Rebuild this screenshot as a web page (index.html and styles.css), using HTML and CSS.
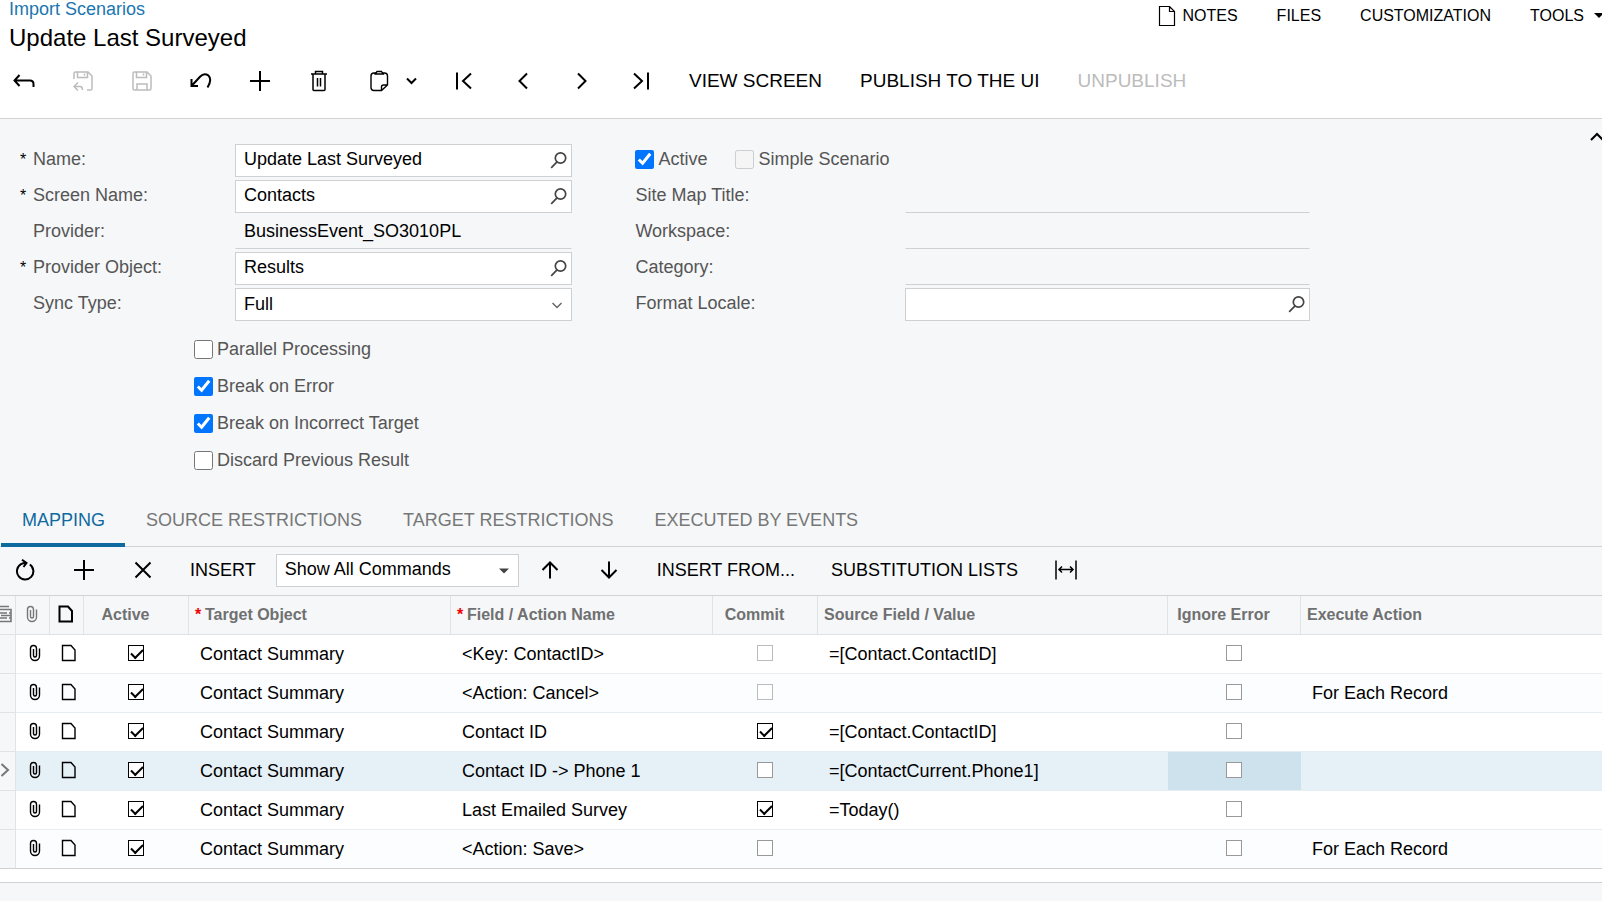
FILE: index.html
```html
<!DOCTYPE html>
<html lang="en">
<head>
    <meta charset="utf-8">
    <title>Import Scenarios - Update Last Surveyed</title>
    <link rel="stylesheet" href="styles.css">
</head>
<body>

<!-- Shared icons -->
<svg class="sprite" aria-hidden="true">
    <symbol id="i-search" viewBox="0 0 18 18"><circle cx="10.5" cy="7" r="5.2"/><path d="M7 10.8 1.2 16.8"/></symbol>
    <symbol id="i-page" viewBox="0 0 16 18"><path d="M1.5 1.5h8.5l4 4.500v10.500h-12.500z"/></symbol>
    <symbol id="i-clip" viewBox="0 0 12 18"><path d="M10.500 4.500v7.500a4.500 4.500 0 0 1-9 0V4.500a3 3 0 0 1 6 0v7a1.500 1.500 0 0 1-3 0V5"/></symbol>
    <symbol id="i-plus" viewBox="0 0 20 20"><path d="M10 0v20M0 10h20"/></symbol>
</svg>

<header class="page-header">
    <div class="title-bar">
        <div class="titles">
            <a class="breadcrumb" href="#">Import Scenarios</a>
            <h1>Update Last Surveyed</h1>
        </div>
        <nav class="top-menu">
            <button type="button"><svg width="18" height="20" viewBox="0 0 18 20"><path d="M1.500 .5h10l5 5v14h-15zM11.500 .5v5h5" stroke-width="1.200"/></svg>NOTES</button>
            <button type="button">FILES</button>
            <button type="button">CUSTOMIZATION</button>
            <button type="button" class="tools">TOOLS<svg width="8" height="6" viewBox="0 0 8 6"><path d="M0 0h10L5 5z" fill="#000" stroke="none"/></svg></button>
        </nav>
    </div>

    <div class="toolbar main-toolbar">
        <button type="button" class="icon-btn" aria-label="Back"><svg width="22" height="20" viewBox="0 0 22 20"><path d="M6.500 4 1.500 9.500l5 5.500M1.500 9.500H17q3.500 0 3.500 3.500v3"/></svg></button>
        <button type="button" class="icon-btn" aria-label="Save and close" disabled><svg width="20" height="20" viewBox="0 0 20 20"><path d="M1 8V2.500Q1 1 2.500 1H15l4 4v12.500q0 1.500-1.500 1.500H14M4.500 1v5.500h10V1M11.500 2.500v2M5 11.500 1 15.500l4 4M1 15.500h6q2.500 0 2.500 3.500" stroke-width="1.500"/></svg></button>
        <button type="button" class="icon-btn" aria-label="Save" disabled><svg width="20" height="20" viewBox="0 0 20 20"><path d="M2.500 1H15l4 4v12.500q0 1.500-1.500 1.500h-15Q1 19 1 17.500v-15Q1 1 2.500 1zM4.500 1v5.500h10V1M11.500 2.500v2M5 19v-6h10v6" stroke-width="1.500"/></svg></button>
        <button type="button" class="icon-btn" aria-label="Undo"><svg width="22" height="20" viewBox="0 0 22 20"><path d="M1.500 8v7h6.500M1.500 15 10 5.800Q14 1.500 18.200 4.300 22.500 8.500 17.500 16.500"/></svg></button>
        <button type="button" class="icon-btn" aria-label="Add"><svg width="20" height="20"><use href="#i-plus"/></svg></button>
        <button type="button" class="icon-btn" aria-label="Delete"><svg width="16" height="22" viewBox="0 0 16 22"><path d="M0 4h16M4.500 4V1.500h7V4M2 4v15.500q0 1 1 1h10q1 0 1-1V4M6.500 8v8.500M9.500 8v8.500" stroke-width="1.500"/></svg></button>
        <button type="button" class="icon-btn paste-btn" aria-label="Clipboard"><svg width="19" height="22" viewBox="0 0 19 22"><path d="M5 3H4Q1 3 1 6v11.500q0 3 3 3h7.500l6-5.500V6q0-3-3-3h-1M5 4V3q1.500 0 2-1.500h4.500Q12 3 13.500 3v1zM11.500 20.500V17q0-2 2-2h4" stroke-width="1.400"/></svg><svg width="11" height="8" viewBox="0 0 11 8"><path d="m1 1.500 4.500 4.500L10 1.500"/></svg></button>
        <button type="button" class="icon-btn" aria-label="First"><svg width="16" height="18" viewBox="0 0 16 18"><path d="M1 .5v17M15 1.500 7 9l8 7.500"/></svg></button>
        <button type="button" class="icon-btn" aria-label="Previous"><svg width="10" height="18" viewBox="0 0 10 18"><path d="M9 1.500 1.500 9 9 16.500"/></svg></button>
        <button type="button" class="icon-btn" aria-label="Next"><svg width="10" height="18" viewBox="0 0 10 18"><path d="M1 1.500 8.500 9 1 16.500"/></svg></button>
        <button type="button" class="icon-btn" aria-label="Last"><svg width="16" height="18" viewBox="0 0 16 18"><path d="M15 .5v17M1 1.500 9 9l-8 7.500"/></svg></button>
        <button type="button" class="text-btn">VIEW SCREEN</button>
        <button type="button" class="text-btn">PUBLISH TO THE UI</button>
        <button type="button" class="text-btn" disabled>UNPUBLISH</button>
    </div>
</header>

<main>
    <form class="summary">
        <button type="button" class="collapse" aria-label="Collapse"><svg width="12" height="10" viewBox="0 0 12 10"><path d="m1 8 6-6 6 6"/></svg></button>

        <div class="summary-col">
            <div class="field required">
                <label for="name">Name:</label>
                <div class="control"><input id="name" type="text" value="Update Last Surveyed"><button type="button" aria-label="Find name"><svg width="18" height="18"><use href="#i-search"/></svg></button></div>
            </div>
            <div class="field required">
                <label for="screenName">Screen Name:</label>
                <div class="control"><input id="screenName" type="text" value="Contacts"><button type="button" aria-label="Find screen"><svg width="18" height="18"><use href="#i-search"/></svg></button></div>
            </div>
            <div class="field">
                <label for="provider">Provider:</label>
                <div class="control"><input id="provider" type="text" value="BusinessEvent_SO3010PL" readonly></div>
            </div>
            <div class="field required">
                <label for="providerObject">Provider Object:</label>
                <div class="control"><input id="providerObject" type="text" value="Results"><button type="button" aria-label="Find object"><svg width="18" height="18"><use href="#i-search"/></svg></button></div>
            </div>
            <div class="field">
                <label for="syncType">Sync Type:</label>
                <div class="control"><select id="syncType"><option>Full</option></select><svg class="select-arrow" width="10" height="7" viewBox="0 0 10 7"><path d="m.5 1 4.500 4.500L9.500 1" stroke-width="1.500"/></svg></div>
            </div>
            <div class="options">
                <label class="check"><input type="checkbox">Parallel Processing</label>
                <label class="check"><input type="checkbox" checked>Break on Error</label>
                <label class="check"><input type="checkbox" checked>Break on Incorrect Target</label>
                <label class="check"><input type="checkbox">Discard Previous Result</label>
            </div>
        </div>

        <div class="summary-col right">
            <div class="flags">
                <label class="check"><input type="checkbox" checked>Active</label>
                <label class="check"><input type="checkbox" disabled>Simple Scenario</label>
            </div>
            <div class="field">
                <label for="siteMapTitle">Site Map Title:</label>
                <div class="control"><input id="siteMapTitle" type="text" readonly></div>
            </div>
            <div class="field">
                <label for="workspace">Workspace:</label>
                <div class="control"><input id="workspace" type="text" readonly></div>
            </div>
            <div class="field">
                <label for="category">Category:</label>
                <div class="control"><input id="category" type="text" readonly></div>
            </div>
            <div class="field">
                <label for="formatLocale">Format Locale:</label>
                <div class="control"><input id="formatLocale" type="text"><button type="button" aria-label="Find locale"><svg width="18" height="18"><use href="#i-search"/></svg></button></div>
            </div>
        </div>
    </form>

    <div class="tabs" role="tablist">
        <button type="button" role="tab" class="tab active" aria-selected="true">MAPPING</button>
        <button type="button" role="tab" class="tab">SOURCE RESTRICTIONS</button>
        <button type="button" role="tab" class="tab">TARGET RESTRICTIONS</button>
        <button type="button" role="tab" class="tab">EXECUTED BY EVENTS</button>
    </div>

    <div class="toolbar grid-toolbar">
        <button type="button" class="icon-btn" aria-label="Refresh"><svg width="20" height="22" viewBox="0 0 20 22"><path d="M14.800 5.500A8.200 8.200 0 1 1 6 5.200Q8 4 11 4M7 .8l4.500 3.200L8.500 8"/></svg></button>
        <button type="button" class="icon-btn" aria-label="Add row"><svg width="20" height="20"><use href="#i-plus"/></svg></button>
        <button type="button" class="icon-btn" aria-label="Delete row"><svg width="18" height="18" viewBox="0 0 18 18"><path d="m1.500 1.500 15 15m0-15-15 15"/></svg></button>
        <button type="button" class="text-btn">INSERT</button>
        <div class="control commands">
            <select aria-label="Commands"><option>Show All Commands</option></select>
            <svg class="select-arrow" width="10" height="6" viewBox="0 0 10 6"><path d="M0 .5h10L5 5.500z" fill="#444" stroke="none"/></svg>
        </div>
        <button type="button" class="icon-btn" aria-label="Row up"><svg width="18" height="18" viewBox="0 0 18 18"><path d="M9 17.500V2M1.500 9 9 1.500 16.500 9"/></svg></button>
        <button type="button" class="icon-btn" aria-label="Row down"><svg width="18" height="18" viewBox="0 0 18 18"><path d="M9 .5V16M1.500 9 9 16.500 16.500 9"/></svg></button>
        <button type="button" class="text-btn">INSERT FROM...</button>
        <button type="button" class="text-btn">SUBSTITUTION LISTS</button>
        <button type="button" class="icon-btn" aria-label="Fit to screen"><svg width="22" height="20" viewBox="0 0 22 20"><path d="M1 .5v19M21 .5v19M4 9.500h14M7 6.500l-3 3 3 3M15 6.500l3 3-3 3" stroke-width="1.500"/></svg></button>
    </div>

    <table class="grid">
        <colgroup>
            <col class="c-marker"><col class="c-icon"><col class="c-icon"><col class="c-check"><col class="c-name"><col class="c-name"><col class="c-check"><col class="c-source"><col class="c-ignore"><col>
        </colgroup>
        <thead>
            <tr>
                <th class="marker"><svg class="muted" width="12" height="18" viewBox="0 0 12 18"><path d="M0 1.500h9M0 4.500h11v12H0M0 8h7M0 13h7M1 10.500h10M9 8h2M9 13h2" stroke-width="1.600"/></svg></th>
                <th class="icon"><svg class="muted" width="12" height="18"><use href="#i-clip"/></svg></th>
                <th class="icon"><svg class="bold" width="16" height="18"><use href="#i-page"/></svg></th>
                <th class="flag">Active</th>
                <th class="req">Target Object</th>
                <th class="req">Field / Action Name</th>
                <th class="flag">Commit</th>
                <th>Source Field / Value</th>
                <th class="flag">Ignore Error</th>
                <th>Execute Action</th>
            </tr>
        </thead>
        <tbody>
            <tr>
                <td class="marker"></td>
                <td class="icon"><svg width="12" height="18"><use href="#i-clip"/></svg></td>
                <td class="icon"><svg width="16" height="18"><use href="#i-page"/></svg></td>
                <td class="flag"><input type="checkbox" aria-label="Active" checked></td>
                <td>Contact Summary</td>
                <td>&lt;Key: ContactID&gt;</td>
                <td class="flag"><input type="checkbox" aria-label="Commit" disabled></td>
                <td>=[Contact.ContactID]</td>
                <td class="flag"><input type="checkbox" aria-label="Ignore error"></td>
                <td></td>
            </tr>
            <tr>
                <td class="marker"></td>
                <td class="icon"><svg width="12" height="18"><use href="#i-clip"/></svg></td>
                <td class="icon"><svg width="16" height="18"><use href="#i-page"/></svg></td>
                <td class="flag"><input type="checkbox" aria-label="Active" checked></td>
                <td>Contact Summary</td>
                <td>&lt;Action: Cancel&gt;</td>
                <td class="flag"><input type="checkbox" aria-label="Commit" disabled></td>
                <td></td>
                <td class="flag"><input type="checkbox" aria-label="Ignore error"></td>
                <td>For Each Record</td>
            </tr>
            <tr>
                <td class="marker"></td>
                <td class="icon"><svg width="12" height="18"><use href="#i-clip"/></svg></td>
                <td class="icon"><svg width="16" height="18"><use href="#i-page"/></svg></td>
                <td class="flag"><input type="checkbox" aria-label="Active" checked></td>
                <td>Contact Summary</td>
                <td>Contact ID</td>
                <td class="flag"><input type="checkbox" aria-label="Commit" checked></td>
                <td>=[Contact.ContactID]</td>
                <td class="flag"><input type="checkbox" aria-label="Ignore error"></td>
                <td></td>
            </tr>
            <tr class="selected">
                <td class="marker"><svg class="muted" width="10" height="14" viewBox="0 0 10 14"><path d="m1.500 1 6.500 6-6.500 6"/></svg></td>
                <td class="icon"><svg width="12" height="18"><use href="#i-clip"/></svg></td>
                <td class="icon"><svg width="16" height="18"><use href="#i-page"/></svg></td>
                <td class="flag"><input type="checkbox" aria-label="Active" checked></td>
                <td>Contact Summary</td>
                <td>Contact ID -&gt; Phone 1</td>
                <td class="flag"><input type="checkbox" aria-label="Commit"></td>
                <td>=[ContactCurrent.Phone1]</td>
                <td class="flag current"><input type="checkbox" aria-label="Ignore error"></td>
                <td></td>
            </tr>
            <tr>
                <td class="marker"></td>
                <td class="icon"><svg width="12" height="18"><use href="#i-clip"/></svg></td>
                <td class="icon"><svg width="16" height="18"><use href="#i-page"/></svg></td>
                <td class="flag"><input type="checkbox" aria-label="Active" checked></td>
                <td>Contact Summary</td>
                <td>Last Emailed Survey</td>
                <td class="flag"><input type="checkbox" aria-label="Commit" checked></td>
                <td>=Today()</td>
                <td class="flag"><input type="checkbox" aria-label="Ignore error"></td>
                <td></td>
            </tr>
            <tr>
                <td class="marker"></td>
                <td class="icon"><svg width="12" height="18"><use href="#i-clip"/></svg></td>
                <td class="icon"><svg width="16" height="18"><use href="#i-page"/></svg></td>
                <td class="flag"><input type="checkbox" aria-label="Active" checked></td>
                <td>Contact Summary</td>
                <td>&lt;Action: Save&gt;</td>
                <td class="flag"><input type="checkbox" aria-label="Commit"></td>
                <td></td>
                <td class="flag"><input type="checkbox" aria-label="Ignore error"></td>
                <td>For Each Record</td>
            </tr>
        </tbody>
    </table>
    <div class="grid-end"></div>
</main>

</body>
</html>
```

FILE: styles.css
```css
* { margin: 0; padding: 0; box-sizing: border-box; }

body {
    font-family: "Liberation Sans", Arial, sans-serif;
    font-size: 18px;
    color: #000;
    background: #f5f7f9;
    overflow-x: hidden;
}

button, input, select {
    font: inherit;
    color: inherit;
}

button {
    background: none;
    border: none;
    cursor: pointer;
}

button:disabled {
    color: #bcbcbc;
    cursor: default;
}

svg {
    display: block;
    flex: none;
    fill: none;
    stroke: currentColor;
    stroke-width: 2;
}

.sprite {
    position: absolute;
    width: 0;
    height: 0;
}

/* Page header */
.page-header {
    background: #fff;
    border-bottom: 1px solid #d0d2d4;
    padding-bottom: 14px;
}

.title-bar {
    display: flex;
    justify-content: space-between;
    padding-left: 9px;
}

.breadcrumb {
    display: block;
    line-height: 18px;
    color: #1b76b0;
    text-decoration: none;
}

h1 {
    font-size: 24px;
    font-weight: normal;
    line-height: 40px;
}

.top-menu {
    display: flex;
    align-items: flex-start;
    gap: 39px;
    font-size: 16px;
}

.top-menu button {
    display: flex;
    align-items: center;
    gap: 6px;
    height: 31px;
}

.top-menu .tools {
    gap: 10px;
}

/* Toolbars */
.toolbar {
    display: flex;
    align-items: center;
    gap: 12px;
}

.main-toolbar {
    height: 46px;
    font-size: 19px;
}

.icon-btn {
    display: flex;
    align-items: center;
    justify-content: center;
    width: 47px;
    height: 40px;
}

.paste-btn {
    width: 74px;
    padding-left: 4px;
    gap: 17px;
}

.text-btn {
    padding: 0 13px;
    height: 40px;
    white-space: nowrap;
}

.grid-toolbar {
    height: 49px;
    padding: 0 0 2px 1px;
    border-bottom: 1px solid #d0d2d4;
}

.grid-toolbar .text-btn {
    padding: 0 12px;
}

.commands {
    width: 243px;
    margin: 0 -4px;
}

/* Summary form */
.summary {
    position: relative;
    display: grid;
    grid-template-columns: minmax(0, 552fr) minmax(0, 674fr);
    column-gap: 63px;
    padding: 25px 292px 16px 20px;
    color: #555;
}

.collapse {
    position: absolute;
    top: 13px;
    right: 0;
    color: #000;
}

.summary-col {
    display: flex;
    flex-direction: column;
    gap: 3px;
}

.field {
    display: grid;
    grid-template-columns: 215px 1fr;
    align-items: center;
}

.right .field {
    grid-template-columns: 270px 1fr;
}

.field label {
    padding: 0 0 2px 13px;
}

.right .field label,
.field.required label {
    padding-left: 0;
}

.field.required label::before {
    content: "*";
    display: inline-block;
    width: 13px;
    color: #000;
    font-size: 16px;
}

.control {
    position: relative;
    color: #000;
}

.control input,
.control select {
    display: block;
    width: 100%;
    height: 33px;
    padding: 0 8px 2px;
    background: #fff;
    border: 1px solid #cdd1d4;
    border-radius: 0;
    appearance: none;
    outline: none;
}

.control input:read-only {
    background: transparent;
    border-color: transparent transparent #cdd1d4;
}

.control button {
    position: absolute;
    top: 7px;
    right: 4px;
    color: #444;
}

.control button svg {
    stroke-width: 1.7;
}

.select-arrow {
    position: absolute;
    top: 14px;
    right: 10px;
    color: #666;
    pointer-events: none;
}

.options {
    margin-top: 7px;
    padding-left: 174px;
}

.check {
    display: flex;
    align-items: center;
    gap: 4px;
}

.check input {
    width: 19px;
    height: 19px;
}

.options .check {
    height: 37px;
}

.flags {
    display: flex;
    gap: 28px;
    height: 33px;
    padding-bottom: 2px;
}

/* Tabs */
.tabs {
    display: flex;
    padding-left: 1px;
    box-shadow: inset 0 -1px #d0d2d4;
}

.tab {
    height: 52px;
    padding: 3px 20px 0 21px;
    border-bottom: 4px solid transparent;
    color: #777;
}

.tab.active {
    color: #0f6aa0;
    border-bottom-color: #0f6aa0;
}

/* Mapping grid */
.grid {
    width: 100%;
    table-layout: fixed;
    border-collapse: separate;
    border-spacing: 0;
    background: #fff;
}

.c-marker { width: 16px; }
.c-icon { width: 34px; }
.c-check { width: 105px; }
.c-name { width: 262px; }
.c-source { width: 350px; }
.c-ignore { width: 133px; }

.grid th {
    height: 39px;
    padding: 0 6px;
    background: #f5f7f9;
    border-right: 1px solid #dfe2e6;
    border-bottom: 1px solid #dfe2e6;
    color: #707070;
    font-size: 16px;
    text-align: left;
    white-space: nowrap;
}

.grid th:last-child {
    border-right: none;
}

.grid th.flag {
    padding: 0 21px 0 0;
    text-align: center;
}

.grid th.req::before {
    content: "*";
    display: inline-block;
    width: 10px;
    color: #f00000;
}

.grid td {
    height: 39px;
    padding: 0 11px;
    border-bottom: 1px solid #e6eef4;
    white-space: nowrap;
}

.grid tbody tr:nth-child(even) {
    background: #fbfdfe;
}

.grid tbody tr.selected {
    background: #e6f0f7;
}

.grid tbody tr.selected td.current {
    background: #cde2ec;
}

.grid tbody tr:last-child td {
    border-bottom-color: #cfd2d4;
}

.grid .icon svg {
    margin: 0 auto;
    stroke-width: 1.4;
}

.grid .icon svg.bold {
    stroke-width: 2;
    color: #000;
}

.grid th.icon {
    padding: 0 1px 2px 0;
}

.grid td.icon {
    padding: 0 0 2px 3px;
}

.grid .marker {
    padding: 0 0 2px;
    background: #f5f7f9;
    border-right: 1px solid #dfe2e6;
    border-bottom-color: #dfe2e6;
}

.muted {
    color: #777;
}

.grid td.flag {
    padding: 0 2px 2px 0;
}

.grid td.flag input {
    display: block;
    position: relative;
    width: 16px;
    height: 16px;
    margin: 0 auto;
    background: #fff;
    border: 1px solid #999;
    appearance: none;
}

.grid td.flag input:disabled {
    border-color: #bbb;
}

.grid td.flag input:checked {
    border-color: #000;
}

/* Tick inside the box */
.grid td.flag input:checked::after {
    content: "";
    position: absolute;
    left: 2px;
    top: 3px;
    width: 10px;
    height: 5px;
    border-left: 2px solid #000;
    border-bottom: 2px solid #000;
    transform: rotate(-45deg);
}

.grid-end {
    height: 14px;
    background: #fff;
    border-bottom: 1px solid #d0d2d4;
}
```
